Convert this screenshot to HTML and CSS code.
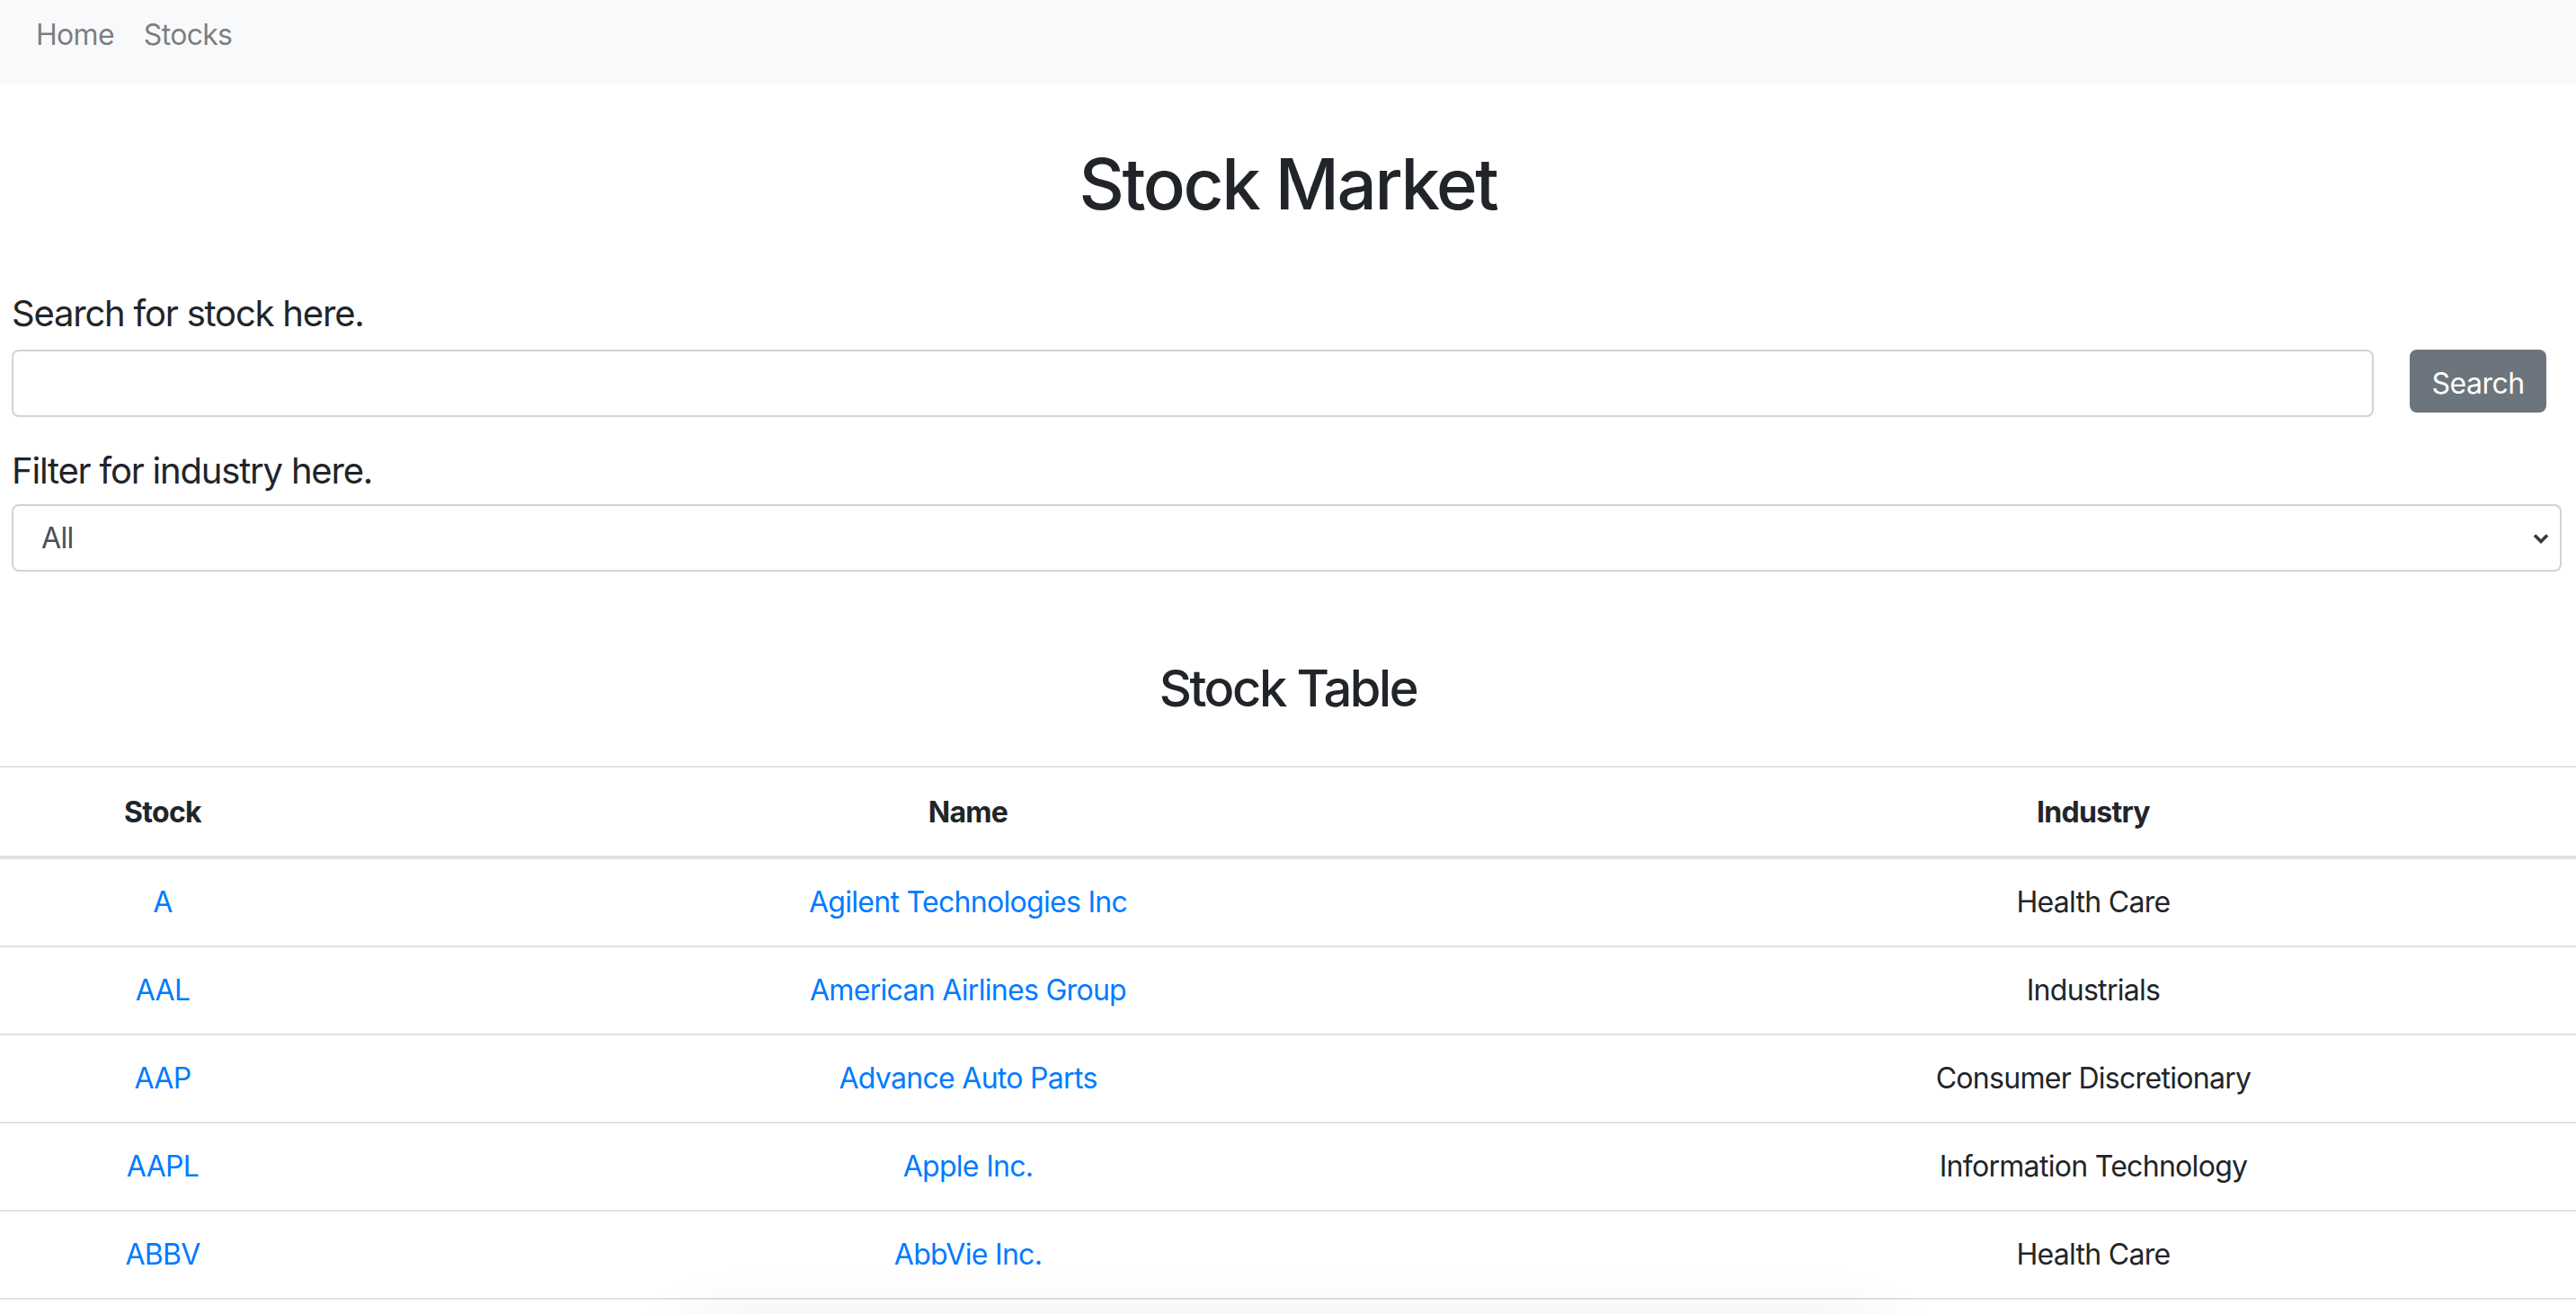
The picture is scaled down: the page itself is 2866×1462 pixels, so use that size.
FILE: index.html
```html
<!DOCTYPE html>
<html lang="en">
<head>
<meta charset="utf-8">
<title>Stock Market</title>
<link rel="stylesheet" href="styles.css">
</head>
<body>
<nav class="navbar">
  <a class="nav-link" href="#">Home</a>
  <a class="nav-link" href="#">Stocks</a>
</nav>
<main>
  <h1 class="title">Stock Market</h1>
  <section class="form">
    <label class="label" for="q">Search for stock here.</label>
    <div class="search-row">
      <input id="q" class="input" type="text">
      <button class="btn">Search</button>
    </div>
    <label class="label label-filter">Filter for industry here.</label>
    <div class="select">
      <span class="select-text">All</span>
      <svg class="chevron" width="18" height="12" viewBox="0 0 18 12"><polyline points="2,2.5 9,9.5 16,2.5" fill="none" stroke="#343a40" stroke-width="3.6"/></svg>
    </div>
  </section>
  <h3 class="subtitle">Stock Table</h3>
  <table class="table">
    <colgroup><col class="c1"><col class="c2"><col class="c3"></colgroup>
    <thead>
      <tr><th>Stock</th><th>Name</th><th>Industry</th></tr>
    </thead>
    <tbody>
      <tr><td><a href="#">A</a></td><td><a href="#">Agilent Technologies Inc</a></td><td>Health Care</td></tr>
      <tr><td><a href="#">AAL</a></td><td><a href="#">American Airlines Group</a></td><td>Industrials</td></tr>
      <tr><td><a href="#">AAP</a></td><td><a href="#">Advance Auto Parts</a></td><td>Consumer Discretionary</td></tr>
      <tr><td><a href="#">AAPL</a></td><td><a href="#">Apple Inc.</a></td><td>Information Technology</td></tr>
      <tr><td><a href="#">ABBV</a></td><td><a href="#">AbbVie Inc.</a></td><td>Health Care</td></tr>
    </tbody>
  </table>
</main>
<div class="toast-shadow"></div>
</body>
</html>
```
FILE: styles.css
```css
html, body {
  margin: 0;
  padding: 0;
  background: #fff;
  overflow: hidden;
}
body {
  font-family: Inter, "Noto Sans", "Liberation Sans", sans-serif;
  font-size: 32px;
  line-height: 48px;
  letter-spacing: -0.7px;
  color: #212529;
}
.navbar {
  display: flex;
  gap: 33px;
  height: 93px;
  box-sizing: border-box;
  padding: 15px 0 0 40px;
  background: #f8f9fa;
}
.nav-link {
  color: rgba(0, 0, 0, 0.5);
  text-decoration: none;
}
.title {
  margin: 64px 0 0;
  font-size: 78px;
  line-height: 96px;
  font-weight: 500;
  letter-spacing: -2.4px;
  text-align: center;
}
.form {
  padding: 0 13px;
  margin-top: 72px;
}
.label {
  display: block;
  height: 48px;
  margin-bottom: 16px;
  font-size: 40px;
  letter-spacing: -1.2px;
}
.label-filter {
  margin-top: 36px;
  margin-bottom: 13px;
}
.search-row {
  display: flex;
  align-items: flex-start;
  gap: 40px;
  padding-right: 20px;
}
.input {
  flex: 1;
  height: 75px;
  box-sizing: border-box;
  border: 2px solid #ced4da;
  border-radius: 8px;
  font: inherit;
  padding: 0 24px;
  margin: 0;
}
.btn {
  width: 152px;
  height: 70px;
  border: none;
  border-radius: 8px;
  background: #6c757d;
  color: #fff;
  font: inherit;
  letter-spacing: -0.5px;
  padding: 5px 0 0;
  margin: 0;
}
.select {
  display: flex;
  align-items: center;
  justify-content: space-between;
  height: 75px;
  box-sizing: border-box;
  margin-right: 3px;
  border: 2px solid #ced4da;
  border-radius: 8px;
  padding: 0 12px 0 31px;
  color: #495057;
}
.chevron {
  display: block;
}
.subtitle {
  margin: 96px 0 0;
  font-size: 56px;
  line-height: 68px;
  font-weight: 500;
  letter-spacing: -2.4px;
  text-align: center;
}
.table {
  margin-top: 52px;
  width: 2866px;
  border-collapse: collapse;
  table-layout: fixed;
}
.c1 { width: 362px; }
.c2 { width: 1430px; }
.c3 { width: 1074px; }
.table th,
.table td {
  text-align: center;
  padding: 24px 0;
  line-height: 48px;
  border-top: 2px solid #dee2e6;
}
.table tbody tr:last-child td {
  border-bottom: 2px solid #dee2e6;
}
.table th {
  padding: 26px 0 24px;
  font-weight: 700;
  border-bottom: 4px solid #dee2e6;
}
.table a {
  color: #007bff;
  text-decoration: none;
}
.toast-shadow {
  position: fixed;
  left: 760px;
  width: 1340px;
  top: 1490px;
  height: 120px;
  border-radius: 40px;
  background: #fff;
  box-shadow: 0 -10px 80px rgba(0, 0, 0, 0.10);
}
```
